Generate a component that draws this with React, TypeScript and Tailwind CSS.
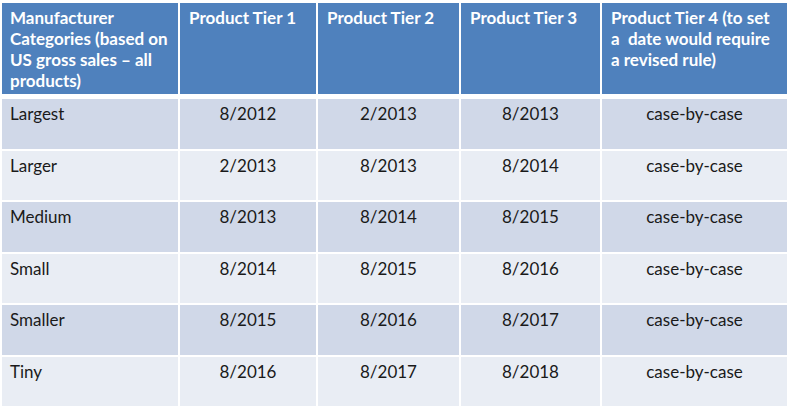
const HEADERS: string[][] = [
  ['Manufacturer', 'Categories (based on', 'US gross sales \u2013 all', 'products)'],
  ['Product Tier 1'],
  ['Product Tier 2'],
  ['Product Tier 3'],
  ['Product Tier 4 (to set', 'a\u00a0 date would require', 'a revised rule)'],
]

const ROWS: { name: string; dates: string[]; h: string }[] = [
  { name: 'Largest', dates: ['8/2012', '2/2013', '8/2013'], h: 'h-[50px]' },
  { name: 'Larger', dates: ['2/2013', '8/2013', '8/2014'], h: 'h-[49px]' },
  { name: 'Medium', dates: ['8/2013', '8/2014', '8/2015'], h: 'h-[50px]' },
  { name: 'Small', dates: ['8/2014', '8/2015', '8/2016'], h: 'h-[49px]' },
  { name: 'Smaller', dates: ['8/2015', '8/2016', '8/2017'], h: 'h-[50px]' },
  { name: 'Tiny', dates: ['8/2016', '8/2017', '8/2018'], h: 'h-[49px]' },
]

const COLS = 'grid grid-cols-[176px_136px_141px_139px_185px] gap-x-[2px]'

export default function App() {
  return (
    <div
      className="w-[791px] h-[410px] bg-white pl-[2px] pt-[3px] text-[17px] leading-[21px]"
      style={{ fontFamily: 'Lato, "Open Sans", sans-serif' }}
    >
      {/* Header */}
      <div className={`${COLS} h-[91px] mb-[5px]`}>
        {HEADERS.map((lines, i) => (
          <div
            key={i}
            className={`bg-[#4f81bd] text-white font-bold pt-[4px] ${i === 0 ? 'pl-[8px]' : 'pl-[9px]'}`}
          >
            {lines.map((l) => (
              <div key={l} className="whitespace-pre">
                {l}
              </div>
            ))}
          </div>
        ))}
      </div>

      {/* Body */}
      <div className="flex flex-col gap-y-[2px]">
        {ROWS.map((r, ri) => (
          <div key={r.name} className={`${COLS} ${r.h}`}>
            {[r.name, ...r.dates, 'case-by-case'].map((c, ci) => (
              <div
                key={ci}
                className={`${ri % 2 === 0 ? 'bg-[#d0d8e8]' : 'bg-[#e9edf4]'} text-[#1a1a1a] pt-[4px] ${ci === 0 ? 'pl-[8px]' : 'text-center'}`}
              >
                {c}
              </div>
            ))}
          </div>
        ))}
      </div>
    </div>
  )
}
